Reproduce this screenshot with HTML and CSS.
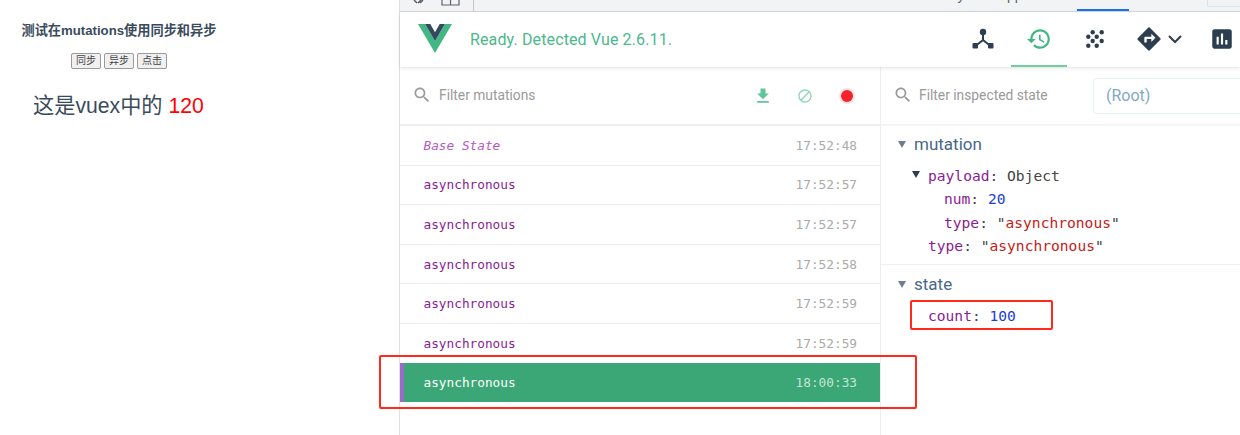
FILE: index.html
```html
<!DOCTYPE html>
<html lang="en">
<head>
    <meta charset="UTF-8">
    <meta name="viewport" content="width=device-width, initial-scale=1.0">
    <title>Vuex mutations</title>
    <link rel="stylesheet" href="styles.css">
</head>
<body>
    <div class="demo">
        <h3>测试在mutations使用同步和异步</h3>
        <div class="demo-buttons">
            <button>同步</button>
            <button>异步</button>
            <button>点击</button>
        </div>
        <p class="demo-count">这是vuex中的 <span class="red">120</span></p>
    </div>

    <div class="devtools">
        <div class="browser-tabs">
            <svg class="cut-icon" width="16" height="11" viewBox="0 0 16 11"><path d="M2 0l3 3M9 0L6 3M8 3l3-3" fill="none" stroke="#5f6368" stroke-width="1.5"/></svg>
            <svg class="cut-icon second" width="20" height="11" viewBox="0 0 20 11"><path d="M1 0v5h17V0M9.500 0v5" fill="none" stroke="#5f6368" stroke-width="1.200"/></svg>
            <span class="tab-sep"></span>
            <span class="tab-text">Memory Application</span>
            <span class="tab-active"></span>
            <span class="tab-box"></span>
        </div>

        <div class="header">
            <svg class="logo" width="34" height="29" viewBox="0 0 36 30" preserveAspectRatio="none">
                <path d="M0 0h7.500L18 17.500 28.500 0H36L18 30z" fill="#41b883"/>
                <path d="M7.500 0H13l5 8.500L23 0h5.500L18 17.500z" fill="#35495e"/>
            </svg>
            <span class="status">Ready. Detected Vue 2.6.11.</span>
            <div class="tabs">
                <span class="tab">
                    <svg width="24" height="24" viewBox="0 0 24 24"><circle cx="12" cy="5" r="3.200" fill="#2c3e50"/><path d="M12 7v6L4.500 19M12 13l7.500 6" fill="none" stroke="#2c3e50" stroke-width="2"/><rect x="1.500" y="16" width="5.500" height="5.500" rx="1" fill="#2c3e50"/><rect x="17" y="16" width="5.500" height="5.500" rx="1" fill="#2c3e50"/></svg>
                </span>
                <span class="tab tab-on">
                    <svg width="26" height="26" viewBox="0 0 24 24"><path fill="#41b883" d="M13 3c-4.970 0-9 4.030-9 9H1l3.890 3.890.07.140L9 12H6c0-3.870 3.130-7 7-7s7 3.130 7 7-3.130 7-7 7c-1.930 0-3.680-.790-4.940-2.060l-1.420 1.420C8.270 19.990 10.510 21 13 21c4.970 0 9-4.030 9-9s-4.030-9-9-9zm-1 5v5l4.280 2.540.720-1.210-3.500-2.080V8H12z"/></svg>
                </span>
                <span class="tab">
                    <svg width="20" height="20" viewBox="0 0 20 20" fill="#2c3e50">
                        <circle cx="7.700" cy="3.300" r="2.200"/><circle cx="16.700" cy="3.300" r="2.200"/>
                        <circle cx="3.300" cy="7.700" r="2.200"/><circle cx="11.700" cy="7.700" r="2.200"/>
                        <circle cx="7.700" cy="12" r="2.200"/><circle cx="16.700" cy="12" r="2.200"/>
                        <circle cx="3.300" cy="16.700" r="2.200"/><circle cx="11.700" cy="16.700" r="2.200"/>
                    </svg>
                </span>
                <span class="tab tab-events">
                    <svg width="28" height="28" viewBox="0 0 24 24"><path fill="#2c3e50" d="M21.710 11.290l-9-9c-.390-.390-1.020-.390-1.410 0l-9 9c-.390.390-.390 1.020 0 1.410l9 9c.390.390 1.020.390 1.410 0l9-9c.390-.380.390-1.010 0-1.410zM14 14.500V12h-4v3H8v-4c0-.550.450-1 1-1h5V7.500l3.500 3.500-3.500 3.500z"/></svg>
                    <svg width="16" height="10" viewBox="0 0 16 10"><path d="M2 2l6 6 6-6" fill="none" stroke="#2c3e50" stroke-width="2"/></svg>
                </span>
                <span class="tab tab-perf">
                    <svg width="26" height="26" viewBox="0 0 24 24"><path fill="#2c3e50" d="M19 3H5c-1.100 0-2 .900-2 2v14c0 1.100.900 2 2 2h14c1.100 0 2-.900 2-2V5c0-1.100-.900-2-2-2zM9 17H7v-7h2v7zm4 0h-2V7h2v10zm4 0h-2v-4h2v4z"/></svg>
                </span>
            </div>
        </div>

        <div class="panes">
            <div class="history">
                <div class="filter-row">
                    <svg class="search" width="20" height="20" viewBox="0 0 24 24"><path fill="#9a9a9a" d="M15.500 14h-.790l-.280-.270C15.410 12.590 16 11.110 16 9.500 16 5.910 13.090 3 9.500 3S3 5.910 3 9.500 5.910 16 9.500 16c1.610 0 3.090-.590 4.230-1.570l.270.280v.790l5 4.990L20.490 19l-4.990-5zm-6 0C7.010 14 5 11.990 5 9.500S7.010 5 9.500 5 14 7.010 14 9.500 11.990 14 9.500 14z"/></svg>
                    <span class="filter-label">Filter mutations</span>
                    <div class="actions">
                        <svg width="20" height="20" viewBox="0 0 24 24"><path fill="#62c49a" d="M19 9h-4V3H9v6H5l7 7 7-7zM5 18v2h14v-2H5z"/></svg>
                        <svg width="16" height="16" viewBox="0 0 24 24"><path fill="#8fd6b6" d="M12 2C6.480 2 2 6.480 2 12s4.480 10 10 10 10-4.480 10-10S17.520 2 12 2zM4 12c0-4.420 3.580-8 8-8 1.850 0 3.550.630 4.900 1.690L5.690 16.900C4.630 15.550 4 13.850 4 12zm8 8c-1.850 0-3.550-.630-4.900-1.690L18.310 7.100C19.370 8.450 20 10.150 20 12c0 4.420-3.580 8-8 8z"/></svg>
                        <span class="record"></span>
                    </div>
                </div>
                <div class="row"><span class="name base">Base State</span><span class="time">17:52:48</span></div>
                <div class="row"><span class="name">asynchronous</span><span class="time">17:52:57</span></div>
                <div class="row"><span class="name">asynchronous</span><span class="time">17:52:57</span></div>
                <div class="row"><span class="name">asynchronous</span><span class="time">17:52:58</span></div>
                <div class="row"><span class="name">asynchronous</span><span class="time">17:52:59</span></div>
                <div class="row"><span class="name">asynchronous</span><span class="time">17:52:59</span></div>
                <div class="row row-active"><span class="name">asynchronous</span><span class="time">18:00:33</span></div>
            </div>

            <div class="inspector">
                <div class="filter-row inspector-filter">
                    <svg class="search" width="20" height="20" viewBox="0 0 24 24"><path fill="#9a9a9a" d="M15.500 14h-.790l-.280-.270C15.410 12.590 16 11.110 16 9.500 16 5.910 13.090 3 9.500 3S3 5.910 3 9.500 5.910 16 9.500 16c1.610 0 3.090-.590 4.230-1.570l.270.280v.790l5 4.990L20.490 19l-4.990-5zm-6 0C7.010 14 5 11.990 5 9.500S7.010 5 9.500 5 14 7.010 14 9.500 11.990 14 9.500 14z"/></svg>
                    <span class="filter-label">Filter inspected state</span>
                    <span class="root-box">(Root)</span>
                </div>
                <div class="section section-mutation">
                    <div class="section-title"><span class="arrow"></span>mutation</div>
                    <div class="line indent-1"><span class="arrow dark"></span><span class="key">payload</span>: Object</div>
                    <div class="line indent-2"><span class="key">num</span>: <span class="num">20</span></div>
                    <div class="line indent-2"><span class="key">type</span>: "<span class="str">asynchronous</span>"</div>
                    <div class="line indent-1"><span class="key">type</span>: "<span class="str">asynchronous</span>"</div>
                </div>
                <div class="section section-state">
                    <div class="section-title"><span class="arrow"></span>state</div>
                    <div class="line indent-1"><span class="key">count</span>: <span class="num">100</span></div>
                </div>
            </div>
        </div>
    </div>

    <!-- annotations drawn over the screenshot -->
    <div class="mark mark-row"></div>
    <div class="mark mark-count"></div>
</body>
</html>
```

FILE: styles.css
```css
body {
    margin: 0;
    height: 435px;
    overflow: hidden;
    display: flex;
    background: #fff;
    color: #2c3e50;
    font-family: Roboto, "Noto Sans CJK SC", sans-serif;
}
.demo {
    width: 399px;
    flex: none;
    border-right: 1px solid #e0e0e0;
    font-family: "Liberation Sans", "Noto Sans CJK SC", sans-serif;
}
.demo h3 {
    margin: 23px 0 0 21.500px;
    font-size: 13.200px;
    line-height: 16px;
    color: #3a4b5c;
}
.demo-buttons {
    display: flex;
    gap: 3px;
    margin: 14px 0 0 71px;
}
.demo-buttons button {
    width: 30px;
    height: 16px;
    padding: 0;
    border: 1px solid #9a9a9a;
    border-radius: 2px;
    background: #f0f0f0;
    color: #444;
    font-size: 10px;
    line-height: 14px;
    font-family: "Liberation Sans", "Noto Sans CJK SC", sans-serif;
}
.demo-count {
    margin: 25px 0 0 33px;
    font-size: 21.200px;
    line-height: 24px;
    color: #3a4b5c;
}
.red {
    color: #f00;
}

.devtools {
    flex: 1;
    min-width: 0;
    display: flex;
    flex-direction: column;
}
.browser-tabs {
    height: 11px;
    flex: none;
    display: flex;
    align-items: flex-end;
    overflow: hidden;
    background: #f1f3f4;
    border-bottom: 1px solid #d8dadc;
    padding-left: 12px;
}
.cut-icon {
    align-self: flex-start;
    flex: none;
}
.cut-icon.second {
    margin-left: 13px;
}
.tab-sep {
    width: 1px;
    height: 11px;
    flex: none;
    margin-left: 12px;
    background: #c4c7ca;
}
.tab-text {
    align-self: flex-start;
    flex: none;
    width: 160px;
    margin: -13px 0 0 440px;
    white-space: nowrap;
    font-family: "Liberation Sans", sans-serif;
    font-size: 14px;
    line-height: 16px;
    color: #5f6368;
    word-spacing: 30px;
}
.tab-active {
    width: 52px;
    height: 2px;
    flex: none;
    margin-left: 3px;
    background: #1a73e8;
}
.tab-box {
    width: 40px;
    height: 6px;
    flex: none;
    margin-left: 78px;
    align-self: flex-start;
    border: 1px solid #d3e3f8;
    border-top: none;
    border-radius: 0 0 0 2px;
}

.header {
    height: 55px;
    flex: none;
    display: flex;
    align-items: center;
    position: relative;
    box-shadow: 0 1px 4px rgba(0, 0, 0, 0.12);
}
.logo {
    margin: -2px 0 0 18px;
    flex: none;
}
.status {
    margin-left: 18px;
    font-size: 16px;
    letter-spacing: 0.130px;
    color: #4cb88c;
}
.tabs {
    margin-left: auto;
    height: 100%;
    display: flex;
    align-items: center;
}
.tab {
    width: 56px;
    height: 100%;
    box-sizing: border-box;
    display: flex;
    align-items: center;
    justify-content: center;
    border-bottom: 2px solid transparent;
}
.tab-on {
    border-bottom-color: #6fcf9f;
}
.tab-events {
    width: 64px;
    gap: 4px;
    justify-content: flex-start;
    padding-left: 12px;
}
.tab-perf {
    width: 53px;
    padding-left: 17px;
}

.panes {
    flex: 1;
    display: flex;
    min-height: 0;
}
.history {
    width: 480px;
    flex: none;
    border-right: 1px solid #eee;
}
.inspector {
    flex: 1;
    min-width: 0;
    overflow: hidden;
}
.filter-row {
    height: 57px;
    box-sizing: content-box;
    display: flex;
    align-items: center;
    border-bottom: 2px solid #eeeeee;
    padding-left: 12px;
    white-space: nowrap;
}
.search {
    flex: none;
    margin-top: -1px;
}
.filter-label {
    margin: -2px 0 0 7px;
    font-size: 13.800px;
    color: #9a9a9a;
}
.actions {
    margin-left: auto;
    display: flex;
    align-items: center;
    gap: 24px;
    padding-right: 27px;
}
.record {
    width: 12px;
    height: 12px;
    margin-left: 4px;
    border-radius: 50%;
    background: #f5222d;
    box-shadow: 0 0 0 2px #fde3e3;
}
.row {
    height: 38.600px;
    display: flex;
    align-items: center;
    justify-content: space-between;
    border-bottom: 1px solid #f0f0f0;
    padding: 0 23px 0 23.500px;
    font-family: "DejaVu Sans Mono", monospace;
    font-size: 12.750px;
}
.name {
    color: #8a1c94;
}
.name.base {
    font-style: italic;
    color: #b658c4;
}
.time {
    color: #aaa;
}
.row-active {
    height: 39px;
    margin-top: -1px;
    border-bottom: none;
    border-left: 4px solid #9b6bc9;
    padding-left: 19.500px;
    background: #3ba776;
}
.row-active .name {
    color: #fff;
}
.row-active .time {
    color: #c4e6d5;
}

.inspector-filter {
    border-bottom: 2px solid #f5f5f5;
}
.inspector-filter .filter-label {
    width: 174px;
    margin-left: 6px;
    flex: none;
}
.root-box {
    width: 160px;
    height: 36px;
    flex: none;
    box-sizing: border-box;
    border: 1px solid #e6f4f1;
    border-radius: 4px;
    padding-left: 12px;
    font-size: 16px;
    line-height: 34px;
    color: #7fa9c6;
}
.section {
    padding: 7px 0 6px 33px;
}
.section-mutation {
    border-bottom: 1px solid #f0f0f0;
    padding-bottom: 7px;
}
.section-state {
    padding-top: 8px;
}
.section-title {
    height: 22px;
    margin-bottom: 9px;
    display: flex;
    align-items: center;
    position: relative;
    font-size: 17px;
    color: #486887;
}
.arrow {
    position: absolute;
    left: -16px;
    top: 8px;
    width: 0;
    height: 0;
    border-left: 4.500px solid transparent;
    border-right: 4.500px solid transparent;
    border-top: 7px solid #6c7f90;
}
.arrow.dark {
    left: -16px;
    top: 7px;
    border-top-color: #2c3e50;
}
.line {
    position: relative;
    height: 23.300px;
    line-height: 23.300px;
    font-family: "DejaVu Sans Mono", monospace;
    font-size: 14.600px;
    color: #444;
    white-space: nowrap;
}
.indent-1 {
    margin-left: 14px;
}
.indent-2 {
    margin-left: 30px;
}
.key {
    color: #8a1c94;
}
.num {
    color: #1c3fd0;
}
.str {
    color: #c41a16;
}

.mark {
    position: absolute;
    box-sizing: border-box;
    border: 2px solid #ff2a1a;
    border-radius: 2px;
}
.mark-row {
    left: 379px;
    top: 355px;
    width: 538px;
    height: 54px;
}
.mark-count {
    left: 910px;
    top: 300px;
    width: 143px;
    height: 30px;
}
```
